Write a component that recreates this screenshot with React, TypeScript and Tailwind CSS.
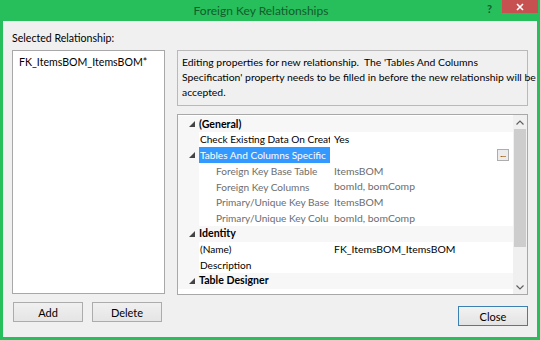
import { FunctionComponent } from "react";

const font = { fontFamily: 'Lato, "Open Sans", sans-serif' };

const Expander: FunctionComponent = () => (
  <svg width="6" height="6" viewBox="0 0 6 6" className="shrink-0">
    <polygon points="6,0 6,6 0,6" fill="#444" />
  </svg>
);

interface Row {
  kind: "cat" | "prop" | "sub";
  name: string;
  value?: string;
  selected?: boolean;
  expander?: boolean;
  ellipsis?: boolean;
}

const rows: Row[] = [
  { kind: "cat", name: "(General)" },
  { kind: "prop", name: "Check Existing Data On Creati", value: "Yes" },
  { kind: "prop", name: "Tables And Columns Specific", selected: true, expander: true, ellipsis: true },
  { kind: "sub", name: "Foreign Key Base Table", value: "ItemsBOM" },
  { kind: "sub", name: "Foreign Key Columns", value: "bomId, bomComp" },
  { kind: "sub", name: "Primary/Unique Key Base", value: "ItemsBOM" },
  { kind: "sub", name: "Primary/Unique Key Colu", value: "bomId, bomComp" },
  { kind: "cat", name: "Identity" },
  { kind: "prop", name: "(Name)", value: "FK_ItemsBOM_ItemsBOM" },
  { kind: "prop", name: "Description" },
  { kind: "cat", name: "Table Designer" },
];

const GridRow: FunctionComponent<{ row: Row }> = ({ row }) => {
  if (row.kind === "cat") {
    return (
      <div className="flex h-[15.7px] items-center bg-[#f7f7f7]">
        <div className="flex w-[21px] justify-end pr-[4px]">
          <Expander />
        </div>
        <span className="text-[10.6px] font-bold text-black">{row.name}</span>
      </div>
    );
  }
  return (
    <div className="flex h-[15.7px] items-center">
      <div className="flex h-full w-[21px] items-center justify-end bg-[#f7f7f7] pr-[4px]">
        {row.expander && <Expander />}
      </div>
      <div
        className={`flex h-full w-[131px] items-center overflow-hidden whitespace-nowrap text-[10.1px] ${
          row.selected ? "bg-[#3399ff] pl-[1px] text-white" : ""
        } ${row.kind === "sub" ? "pl-[17px] text-[#6d6d6d]" : "pl-[1px] text-black"}`}
      >
        {row.name}
      </div>
      <div
        className={`flex h-full flex-1 items-center pl-[4px] ${
          row.kind === "sub" ? "text-[#6d6d6d]" : "text-black"
        }`}
      >
        {row.value}
      </div>
      {row.ellipsis && (
        <div className="mr-[4px] flex h-[12px] w-[12px] items-end justify-center border border-[#adadad] bg-[#ececec] pb-[2px] text-[8px] leading-none text-black">
          ...
        </div>
      )}
    </div>
  );
};

const Button: FunctionComponent<{ label: string; primary?: boolean }> = ({ label, primary }) => (
  <button
    className={`flex h-[20px] w-[70px] items-center justify-center border text-[11px] text-black ${
      primary
        ? "border-[#3c7fb1] bg-gradient-to-b from-[#f2f2f2] to-[#e3e3e3]"
        : "border-[#acacac] bg-gradient-to-b from-[#f0f0f0] to-[#e5e5e5]"
    }`}
  >
    {label}
  </button>
);

export default function App() {
  return (
    <div
      className="flex h-[340px] w-[540px] flex-col overflow-hidden bg-[#26bf5c] px-[3px] pb-[3px] text-[10.4px] leading-none"
      style={font}
    >
      <div className="relative flex h-[21px] shrink-0 items-center justify-center">
        <span className="ml-[-18px] text-[12px] text-[#145c2b]">Foreign Key Relationships</span>
        <div className="absolute right-[-1px] top-0 flex items-start">
          <span className="mr-[10px] mt-[3px] text-[11px] font-bold text-[#145c2b]">?</span>
          <div className="flex h-[13px] w-[36px] items-center justify-center bg-[#c75050]">
            <svg width="8" height="8" viewBox="0 0 8 8">
              <path d="M1 1 L7 7 M7 1 L1 7" stroke="#fff" strokeWidth="1.6" />
            </svg>
          </div>
        </div>
      </div>

      <div className="flex flex-1 gap-[12px] bg-[#f0f0f0] pl-[9px] pt-[12px]">
        <div className="flex w-[153px] flex-col">
          <div className="h-[17px] text-[10.6px] text-black">Selected Relationship:</div>
          <div className="h-[244px] border border-[#a8a8a8] bg-white px-[6px] pt-[6px] text-[10.6px]">
            FK_ItemsBOM_ItemsBOM*
          </div>
          <div className="mt-[8px] flex gap-[9px] pl-[1px]">
            <Button label="Add" />
            <Button label="Delete" />
          </div>
        </div>

        <div className="flex w-[351px] flex-col pt-[17px]">
          <div className="h-[56px] whitespace-nowrap border border-[#b9b9b9] bg-[#f0f0f0] px-[4px] pt-[4px] leading-[15px] text-black">
            Editing properties for new relationship.&nbsp; The 'Tables And Columns
            <br />
            Specification' property needs to be filled in before the new relationship will be
            <br />
            accepted.
          </div>

          <div className="mt-[8px] flex h-[181px] border border-[#a8a8a8] bg-white">
            <div className="flex flex-1 flex-col pt-[1px]">
              {rows.map((row) => (
                <GridRow key={row.name} row={row} />
              ))}
            </div>
            <div className="flex w-[14px] flex-col bg-[#f0f0f0]">
              <div className="flex h-[14px] items-center justify-center">
                <svg width="8" height="5" viewBox="0 0 8 5">
                  <path d="M0.5 4.5 L4 1 L7.5 4.5" fill="none" stroke="#606060" strokeWidth="1.2" />
                </svg>
              </div>
              <div className="mx-[1px] h-[118px] bg-[#cdcdcd]" />
              <div className="flex-1" />
              <div className="flex h-[14px] items-center justify-center">
                <svg width="8" height="5" viewBox="0 0 8 5">
                  <path d="M0.5 0.5 L4 4 L7.5 0.5" fill="none" stroke="#606060" strokeWidth="1.2" />
                </svg>
              </div>
            </div>
          </div>

          <div className="mt-[11px] flex justify-end">
            <Button label="Close" primary />
          </div>
        </div>
      </div>
    </div>
  );
}
